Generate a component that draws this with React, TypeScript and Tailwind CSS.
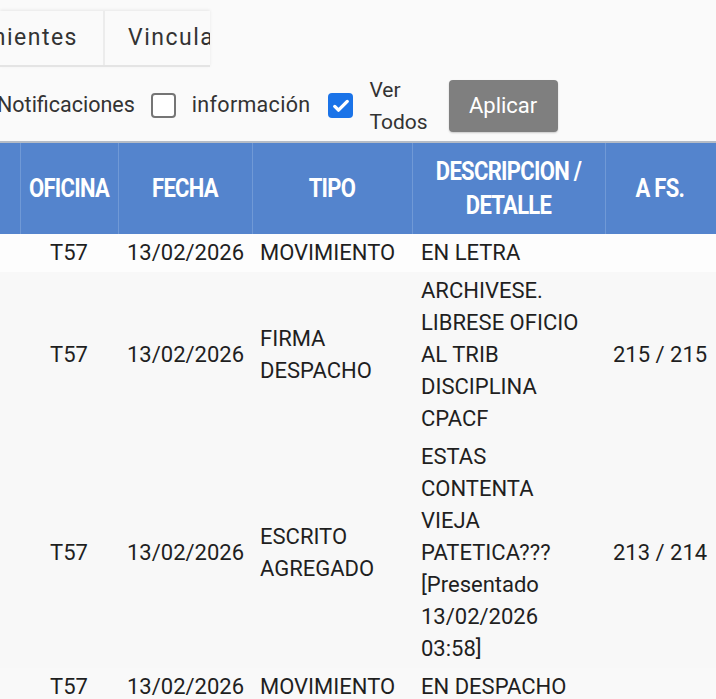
import React from 'react';

type Row = {
  oficina: string;
  fecha: string;
  tipo: string[];
  detalle: string[];
  fs: string;
  bg: string;
};

const ROWS: Row[] = [
  { oficina: 'T57', fecha: '13/02/2026', tipo: ['MOVIMIENTO'], detalle: ['EN LETRA'], fs: '', bg: 'bg-[#fdfdfd]' },
  {
    oficina: 'T57',
    fecha: '13/02/2026',
    tipo: ['FIRMA', 'DESPACHO'],
    detalle: ['ARCHIVESE.', 'LIBRESE OFICIO', 'AL TRIB', 'DISCIPLINA', 'CPACF'],
    fs: '215 / 215',
    bg: 'bg-[#f8f8f8]',
  },
  {
    oficina: 'T57',
    fecha: '13/02/2026',
    tipo: ['ESCRITO', 'AGREGADO'],
    detalle: ['ESTAS', 'CONTENTA', 'VIEJA', 'PATETICA???', '[Presentado', '13/02/2026', '03:58]'],
    fs: '213 / 214',
    bg: 'bg-[#f8f8f8]',
  },
  { oficina: 'T57', fecha: '13/02/2026', tipo: ['MOVIMIENTO'], detalle: ['EN DESPACHO'], fs: '', bg: 'bg-[#f9f9f9]' },
];

const Checkbox = ({ checked }: { checked?: boolean }) =>
  checked ? (
    <span className="flex h-[25px] w-[25px] items-center justify-center rounded-[4px] bg-[#1a73e8]">
      <svg width="20" height="20" viewBox="0 0 24 24" fill="none" stroke="white" strokeWidth="4" strokeLinecap="round" strokeLinejoin="round">
        <path d="M4.5 12.5l4.5 4.5L19.5 6.5" />
      </svg>
    </span>
  ) : (
    <span className="block h-[25px] w-[25px] rounded-[4px] border-2 border-[#757575] bg-white" />
  );

const HeadText = ({ children }: { children: React.ReactNode }) => (
  <span className="inline-block scale-y-[1.15]">{children}</span>
);

export default function App() {
  return (
    <div className="h-[699px] w-[716px] overflow-hidden bg-[#fafafa] font-['Roboto',sans-serif] text-[#222]">
      {/* Tabs */}
      <div className="h-[11px] w-[210px]" />
      <div className="flex h-[56px] w-[210px] overflow-hidden border-b-2 border-[#e4e4e4] bg-[#fafafa] shadow-[0_-1px_3px_rgba(0,0,0,0.08)]">
        <div className="flex w-[105px] shrink-0 items-center justify-end overflow-hidden border-r-2 border-[#ececec] pr-[25px]">
          <span className="whitespace-nowrap text-[23px] tracking-[1.5px] text-[#333]">Intervinientes</span>
        </div>
        <div className="flex shrink-0 items-center pl-[23px]">
          <span className="whitespace-nowrap text-[23px] tracking-[1.5px] text-[#333]">Vinculados</span>
        </div>
      </div>

      {/* Filters */}
      <div className="flex h-[74px] items-center pt-[3px] text-[21.5px] text-[#333]">
        <span className="-ml-[3px] whitespace-nowrap">Notificaciones</span>
        <span className="ml-[16px]"><Checkbox /></span>
        <span className="ml-[16px] whitespace-nowrap tracking-[0.3px]">información</span>
        <span className="ml-[18px]"><Checkbox checked /></span>
        <span className="ml-[16px] flex flex-col text-[21px] leading-[32px]">
          <span>Ver</span>
          <span>Todos</span>
        </span>
        <button className="ml-[21px] flex h-[52px] w-[109px] items-center justify-center rounded-[4px] bg-[#7f7f7f] text-[22px] text-white shadow-[0_1px_2px_rgba(0,0,0,0.2)]">
          Aplicar
        </button>
      </div>

      {/* Table */}
      <table className="w-[760px] table-fixed border-collapse border-t-2 border-[#b5bcc6]">
        <colgroup>
          <col className="w-[20px]" />
          <col className="w-[98px]" />
          <col className="w-[134px]" />
          <col className="w-[160px]" />
          <col className="w-[193px]" />
          <col className="w-[155px]" />
        </colgroup>
        <thead>
          <tr className="h-[92px] bg-[#5484cd] text-[22px] font-bold leading-[30px] tracking-[-0.7px] text-white">
            <th className="border-r border-[#7099d6]" />
            <th className="border-r border-[#7099d6] text-center"><HeadText>OFICINA</HeadText></th>
            <th className="border-r border-[#7099d6] text-center"><HeadText>FECHA</HeadText></th>
            <th className="border-r border-[#7099d6] text-center"><HeadText>TIPO</HeadText></th>
            <th className="border-r border-[#7099d6] px-2 text-center">
              <HeadText>DESCRIPCION /<br />DETALLE</HeadText>
            </th>
            <th className="pl-[30px] text-left"><HeadText>A FS.</HeadText></th>
          </tr>
        </thead>
        <tbody className="text-[22px] leading-[32px] text-[#1f1f1f]">
          {ROWS.map((r, i) => (
            <tr key={i} className={r.bg}>
              <td />
              <td className="py-[3px] text-center align-middle">{r.oficina}</td>
              <td className="py-[3px] pl-[9px] text-left align-middle whitespace-nowrap">{r.fecha}</td>
              <td className="py-[3px] pl-[8px] align-middle">
                {r.tipo.map((t) => (
                  <div key={t}>{t}</div>
                ))}
              </td>
              <td className="py-[3px] pl-[9px] align-middle">
                {r.detalle.map((d, j) => (
                  <div key={j} className="whitespace-nowrap">{d}</div>
                ))}
              </td>
              <td className="py-[3px] pl-[8px] align-middle whitespace-nowrap">{r.fs}</td>
            </tr>
          ))}
        </tbody>
      </table>
    </div>
  );
}
